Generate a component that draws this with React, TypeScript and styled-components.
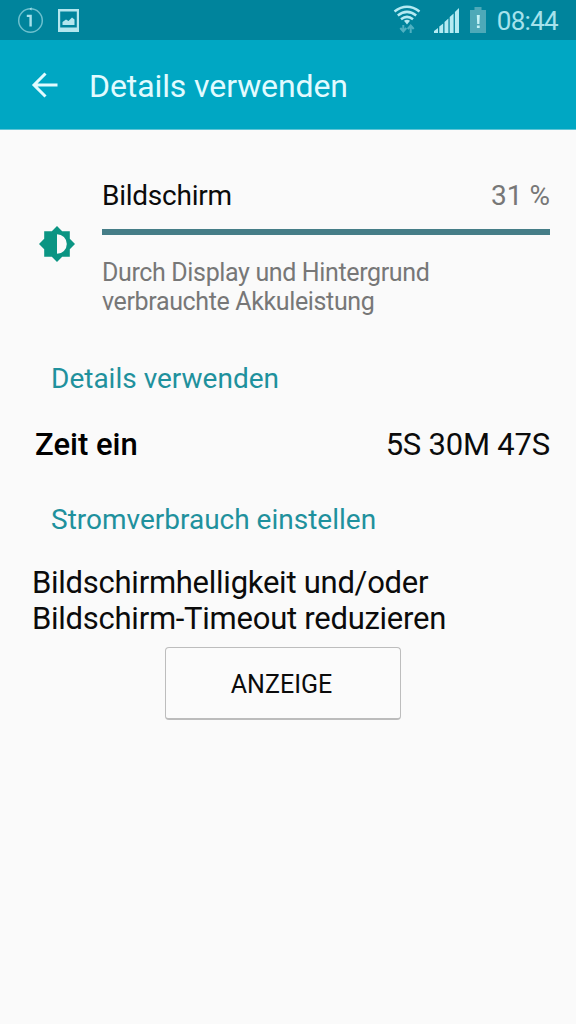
import React from "react";
import styled, { createGlobalStyle } from "styled-components";

const GlobalStyle = createGlobalStyle`
  * { box-sizing: border-box; }
  html, body { margin: 0; padding: 0; }
  body { background: #fafafa; font-family: Roboto, "Liberation Sans", sans-serif; color: #0b0b0b; }
  h1, h2, p { margin: 0; font-weight: 400; }
`;

const Screen = styled.div`
  width: 576px;
  height: 1024px;
  background: #fafafa;
  display: flex;
  flex-direction: column;
  overflow: hidden;
`;

const StatusBar = styled.header`
  height: 40px;
  flex: none;
  background: #00849c;
  display: flex;
  justify-content: space-between;
  padding: 0 18px 0 17px;
`;

const StatusGroup = styled.div`
  display: flex;
  align-items: flex-start;
`;

const StatusIcon = styled.svg<{ $gap?: number }>`
  display: block;
  flex: none;
  margin-right: ${(p) => p.$gap ?? 0}px;
`;

const Clock = styled.span`
  font-size: 26px;
  line-height: 42px;
  letter-spacing: -0.7px;
  color: #a6e2ec;
  white-space: nowrap;
`;

const AppBar = styled.nav`
  height: 90px;
  flex: none;
  background: #00a7c3;
  border-bottom: 1px solid #5fc5d6;
  display: flex;
  align-items: center;
  padding: 2px 0 0 31px;
`;

const BackButton = styled.button`
  border: 0;
  padding: 0;
  background: none;
  width: 28px;
  height: 28px;
  margin: -2px 30px 0 0;
`;

const BackArrow = styled.svg`
  display: block;
`;

const Title = styled.h1`
  font-size: 32px;
  line-height: 40px;
  letter-spacing: -0.1px;
  color: #e2fbff;
  white-space: nowrap;
`;

const UsageItem = styled.section`
  display: flex;
  align-items: center;
  padding: 50px 26px 0 39px;
`;

const UsageIcon = styled.svg`
  flex: none;
  display: block;
  width: 36px;
  height: 36px;
  margin: -8px 27px 0 0;
`;

const UsageBody = styled.div`
  flex: 1;
`;

const Line = styled.div`
  display: flex;
  justify-content: space-between;
  line-height: 32px;
  font-size: 28px;
`;

const Name = styled.span`
  letter-spacing: -0.25px;
`;

const Percent = styled.span`
  color: #777;
`;

const Meter = styled.div`
  height: 6px;
  margin: 17px 0 23px;
  background: #457d87;
`;

const Description = styled.p`
  font-size: 25px;
  line-height: 29px;
  letter-spacing: -0.36px;
  color: #777;
  white-space: nowrap;
`;

const SectionTitle = styled.h2<{ $top: number }>`
  margin: ${(p) => p.$top}px 0 0 51px;
  font-size: 28px;
  line-height: 32px;
  color: #1f919d;
  white-space: nowrap;
`;

const DetailRow = styled.div`
  display: flex;
  justify-content: space-between;
  margin-top: 32px;
  padding: 0 26px 0 35px;
  font-size: 31px;
  line-height: 35px;
`;

const DetailLabel = styled.span`
  font-weight: 500;
  color: #000;
`;

const DetailValue = styled.span`
  letter-spacing: -0.2px;
`;

const Advice = styled.p`
  margin: 29px 0 0 32px;
  font-size: 31px;
  line-height: 36px;
  letter-spacing: -0.26px;
  white-space: nowrap;
`;

const ActionButton = styled.button`
  align-self: center;
  width: 236px;
  height: 73px;
  margin: 10px 10px 0 0;
  padding: 3px 3px 0 0;
  border: 1px solid #bdbdbd;
  border-bottom: 2px solid #bcbcbc;
  border-radius: 4px;
  background: #fbfbfb;
  color: #0b0b0b;
  font-family: inherit;
  font-size: 25px;
`;

export default function App() {
  return (
    <Screen>
      <GlobalStyle />
      <StatusBar>
        <StatusGroup>
          <StatusIcon width="28" height="40" viewBox="0 0 28 40" $gap={13} fill="none">
            <circle cx="13.500" cy="20.500" r="11.800" stroke="#6cc0ce" strokeWidth="1.500" />
            <path d="M12.500 8.900L14.500 7.200V10.500Z" fill="#a6e2ec" />
            <path d="M9.800 15.900H13.600V26.500" stroke="#a6e2ec" strokeWidth="2.400" />
          </StatusIcon>
          <StatusIcon width="22" height="40" viewBox="0 0 22 40">
            <path fillRule="evenodd" fill="#b4e6ee" d="M0 9H21V32H0ZM2.200 11.500V27.500H18.800V11.500Z" />
            <path fill="#b4e6ee" d="M4.500 25V22L8 19.500L10.500 21L14 17.500L16.500 19.500V25Z" />
          </StatusIcon>
        </StatusGroup>
        <StatusGroup>
          <StatusIcon width="28" height="40" viewBox="0 0 28 40" $gap={13} fill="none" stroke="#b4eaf2" strokeWidth="2.500">
            <path d="M1.500 11.500Q14 2 26.500 11.500" />
            <path d="M4.800 15.500Q14 8.300 23.200 15.500" />
            <path d="M8 19.200Q14 14.500 20 19.200" />
            <path d="M11 20.800Q14 18.600 17 20.800L14 24.500Z" fill="#b4eaf2" stroke="none" />
            <path d="M10.300 25V31M7.300 28L10.300 31.500L13.300 28M17.700 33V26M14.700 29L17.700 25.500L20.700 29" stroke="#4fb0c1" strokeWidth="2" />
          </StatusIcon>
          <StatusIcon width="26" height="40" viewBox="0 0 26 40" $gap={10} fill="#b4eaf2">
            <path d="M0 33V31L4 28V33ZM5.300 33V26.500L9.200 23.500V33ZM10.500 33V22L14.400 18.500V33ZM15.700 33V17L19.600 13.500V33ZM20.900 33V12L25 8V33Z" />
          </StatusIcon>
          <StatusIcon width="16" height="40" viewBox="0 0 16 40" $gap={11}>
            <path fill="#4ea9b8" d="M0 10H4.500V7H11.500V10H16V33H0Z" />
            <path fill="#c4f2f6" d="M6.800 15H9.800L9.400 24H7.200ZM6.900 25.600H9.700V28H6.900Z" />
          </StatusIcon>
          <Clock>08:44</Clock>
        </StatusGroup>
      </StatusBar>

      <AppBar>
        <BackButton aria-label="Zurück">
          <BackArrow width="28" height="28" viewBox="0 0 28 28" fill="none" stroke="#e2fbff" strokeWidth="3">
            <path d="M26.500 14H3M14.500 2.500L3 14L14.500 25.500" />
          </BackArrow>
        </BackButton>
        <Title>Details verwenden</Title>
      </AppBar>

      <UsageItem>
        <UsageIcon viewBox="0 0 36 36">
          <path
            fillRule="evenodd"
            fill="#0b9583"
            d="M18 0L23.200 5.200H30.800V12.800L36 18L30.800 23.200V30.800H23.200L18 36L12.800 30.800H5.200V23.200L0 18L5.200 12.800V5.200H12.800ZM18 8.200V27.800A9.800 9.800 0 0 0 18 8.200Z"
          />
        </UsageIcon>
        <UsageBody>
          <Line>
            <Name>Bildschirm</Name>
            <Percent>31 %</Percent>
          </Line>
          <Meter />
          <Description>
            Durch Display und Hintergrund
            <br />
            verbrauchte Akkuleistung
          </Description>
        </UsageBody>
      </UsageItem>

      <SectionTitle $top={47}>Details verwenden</SectionTitle>
      <DetailRow>
        <DetailLabel>Zeit ein</DetailLabel>
        <DetailValue>5S 30M 47S</DetailValue>
      </DetailRow>

      <SectionTitle $top={42}>Stromverbrauch einstellen</SectionTitle>
      <Advice>
        Bildschirmhelligkeit und/oder
        <br />
        Bildschirm-Timeout reduzieren
      </Advice>
      <ActionButton>ANZEIGE</ActionButton>
    </Screen>
  );
}
